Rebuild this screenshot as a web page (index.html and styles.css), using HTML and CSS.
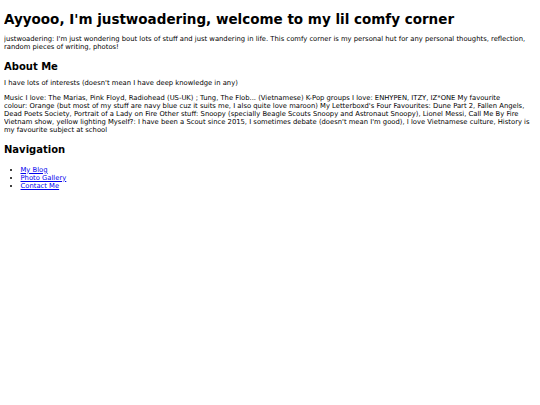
FILE: index.html
```html
<!DOCTYPE html>
<html>
<head>
<meta charset="utf-8">
<title>justwoadering</title>
<link rel="stylesheet" href="styles.css">
</head>
<body>
<h1 class="title">Ayyooo, I'm justwoadering, welcome to my lil comfy corner</h1>
<p class="text">justwoadering: I'm just wondering bout lots of stuff and just wandering in life. This comfy corner is my personal hut for any personal thoughts, reflection, random pieces of writing, photos!</p>
<h2 class="heading">About Me</h2>
<p class="text">I have lots of interests (doesn't mean I have deep knowledge in any)</p>
<p class="text bio">Music I love: The Marias, Pink Floyd, Radiohead (US-UK) ; Tung, The Flob... (Vietnamese) K-Pop groups I love: ENHYPEN, ITZY, IZ*ONE My favourite<br>colour: Orange (but most of my stuff are navy blue cuz it suits me, I also quite love maroon) My Letterboxd's Four Favourites: Dune Part 2, Fallen Angels,<br>Dead Poets Society, Portrait of a Lady on Fire Other stuff: Snoopy (specially Beagle Scouts Snoopy and Astronaut Snoopy), Lionel Messi, Call Me By Fire<br>Vietnam show, yellow lighting Myself?: I have been a Scout since 2015, I sometimes debate (doesn't mean I'm good), I love Vietnamese culture, History is<br>my favourite subject at school</p>
<h2 class="heading">Navigation</h2>
<ul class="nav">
<li><a href="#">My Blog</a></li>
<li><a href="#">Photo Gallery</a></li>
<li><a href="#">Contact Me</a></li>
</ul>
</body>
</html>
```
FILE: styles.css
```css
body {
  margin: 4px;
  font-family: "DejaVu Sans", Verdana, sans-serif;
  font-size: 6.8px;
  line-height: 8px;
  color: #000;
  background: #fff;
}
.title {
  font-size: 13.5px;
  line-height: 15.7px;
  margin: 7.5px 0 8.2px;
}
.heading {
  font-size: 10px;
  line-height: 11.6px;
  margin: 9.6px 0 6.2px;
}
.text {
  margin: 0 0 7.7px;
}
.bio {
  white-space: nowrap;
}
.nav {
  margin: 10px 0;
  padding-left: 16.5px;
  line-height: 8px;
}
.nav a {
  color: #0000ee;
}
```
